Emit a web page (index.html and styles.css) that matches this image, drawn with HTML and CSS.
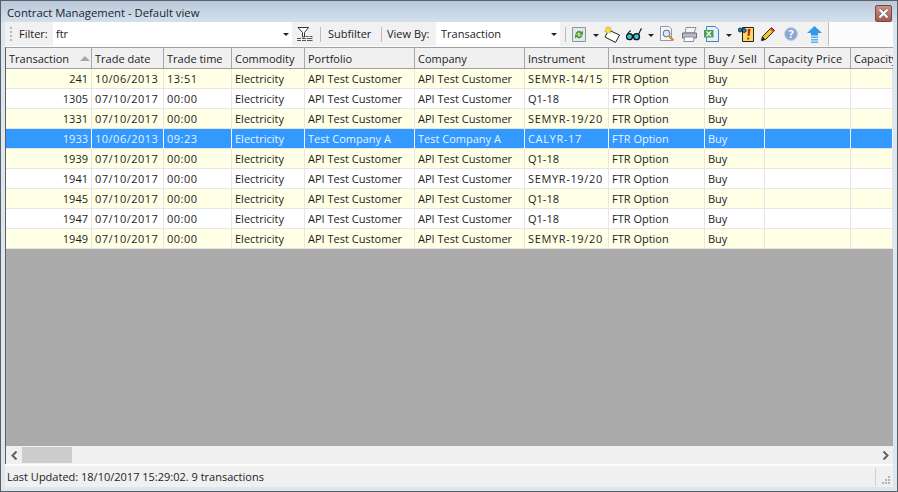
FILE: index.html
```html
<!DOCTYPE html>
<html lang="en">
<head>
  <meta charset="UTF-8" />
  <title>Contract Management</title>
  <link rel="stylesheet" href="styles.css">
</head>
<body>
  <div class="window">
    <div class="titlebar">
      <span class="title">Contract Management - Default view</span>
      <button class="close"><svg width="13" height="11" viewBox="0 0 13 11"><path d="M2.5 1.5 L10.5 9.5 M10.5 1.5 L2.5 9.5" stroke="#6d6d6d" stroke-width="3.6" fill="none"/><path d="M2.5 1.5 L10.5 9.5 M10.5 1.5 L2.5 9.5" stroke="#fff" stroke-width="2.2" fill="none"/></svg></button>
    </div>

    <div class="toolbar">
      <div class="strip">
        <span class="grip"></span>
        <span class="label label-filter">Filter:</span>
        <div class="combo combo-filter"><span>ftr</span><i class="caret"></i></div>
        <svg class="ico-filter" width="16" height="15" viewBox="0 0 16 15"><path d="M1 0.5 H11.5 L7.5 5.5 V10 H5.5 V5.5 Z" fill="#fff" stroke="#333" stroke-width="1"/><path d="M8.5 9.5 H11.5 M12.5 9.5 H15.5 M0 11.5 H4 M5 11.5 H9 M10 11.5 H15.5 M0 13.5 H4 M5 13.5 H9 M10 13.5 H15.5" stroke="#555" stroke-width="1"/></svg>
        <span class="sep sep-a"></span>
        <span class="label label-sub">Subfilter</span>
        <span class="sep sep-b"></span>
        <span class="label label-view">View By:</span>
        <div class="combo combo-view"><span>Transaction</span><i class="caret"></i></div>
        <span class="sep sep-c"></span>
        <svg class="ico-refresh" width="14" height="15" viewBox="0 0 14 15"><path d="M0.5 0.5 H13.5 V14.5 H0.5 Z" fill="#e3e7ef" stroke="#8b93a6"/><path d="M3.5 7 A3.4 3.4 0 0 1 9.5 5 L11 3.5 V7.8 H6.8 L8.2 6.4 A1.6 1.6 0 0 0 5.4 7 Z M10.5 8.2 A3.4 3.4 0 0 1 4.5 10 L3 11.5 V7.4 H7.2 L5.8 8.7 A1.6 1.6 0 0 0 8.6 8.2 Z" fill="#4f9e2c"/></svg>
        <i class="caret drop-a"></i>
        <svg class="ico-new" width="16" height="17" viewBox="0 0 16 17"><path d="M4.5 4 L15.5 9 L11.5 16.5 L1 11 Z" fill="#fff" stroke="#222"/><path d="M4 0 L4.8 2.4 L7 1 L6 3.4 L8.5 4.2 L6 5 L6.5 7.5 L4.5 6 L3 8 L2.8 5.5 L0.2 5.2 L2.4 3.7 L1 1.5 L3.2 2.4 Z" fill="#f5e13c" stroke="#b59b1a" stroke-width=".4"/></svg>
        <svg class="ico-glasses" width="16" height="13" viewBox="0 0 16 13"><circle cx="3.5" cy="8.7" r="3" fill="#35c8dc" stroke="#111" stroke-width="1.3"/><circle cx="10.5" cy="8.7" r="3" fill="#35c8dc" stroke="#111" stroke-width="1.3"/><path d="M6 7.5 Q7 6.5 8 7.5 M1.5 6 L4 3 H5 M12.5 6.5 L15 1 H16" stroke="#111" fill="none" stroke-width="1.1"/></svg>
        <i class="caret drop-b"></i>
        <svg class="ico-preview" width="15" height="16" viewBox="0 0 15 16"><path d="M0.5 0.5 H9 L11.5 3 V14.5 H0.5 Z" fill="#f4f6fb" stroke="#8d97ae"/><circle cx="6.5" cy="7.5" r="3.4" fill="#d6e8f6" stroke="#667"/><path d="M9 10 L13.5 14.5" stroke="#d98b2b" stroke-width="2.4"/></svg>
        <svg class="ico-print" width="15" height="15" viewBox="0 0 15 15"><path d="M4 0.5 H14 L12 6 H3 Z" fill="#f1f2f4" stroke="#8b8f98"/><path d="M0.5 6 H14.5 V11 H0.5 Z" fill="#b6bbc4" stroke="#6e737d"/><path d="M2.5 10 H12 L11.5 14.5 H2 Z" fill="#fff" stroke="#8b8f98"/></svg>
        <svg class="ico-excel" width="15" height="16" viewBox="0 0 15 16"><path d="M2.5 0.5 H11 L14.5 3.5 V15.5 H2.5 Z" fill="#e6f0fb" stroke="#4d7fc0"/><path d="M0 4 H9.5 V11.5 H0 Z" fill="#4b9a55"/><path d="M2.5 5.3 L7 10.2 M7 5.3 L2.5 10.2" stroke="#e8f5e8" stroke-width="1.5"/></svg>
        <i class="caret drop-c"></i>
        <svg class="ico-note" width="16" height="16" viewBox="0 0 16 16"><path d="M4.5 1.5 H15.5 V15.5 H4.5 Z" fill="#f3df5e" stroke="#222"/><path d="M10 3 L9.5 10 H11.5 L12.5 3 Z M9.2 11.5 H11.2 V13.5 H9.2 Z" fill="#d5161c"/><circle cx="2.2" cy="4" r="2" fill="#1d7fb0" stroke="#123" stroke-width=".8"/><circle cx="6.2" cy="4.5" r="2" fill="#1d7fb0" stroke="#123" stroke-width=".8"/></svg>
        <svg class="ico-pencil" width="14" height="14" viewBox="0 0 14 14"><path d="M10.5 0.5 L13.5 3.5 L4.5 12.5 L0.5 13.5 L1.5 9.5 Z" fill="#f2c52c" stroke="#222"/><path d="M10.5 0.5 L13.5 3.5 L12 5 L9 2 Z" fill="#d93a2b"/><path d="M0.5 13.5 L1.5 9.5 L4.5 12.5 Z" fill="#222"/></svg>
        <svg class="ico-help" width="14" height="14" viewBox="0 0 14 14"><circle cx="7" cy="7" r="6.4" fill="#8aa8d2" stroke="#bccde4"/><text x="7" y="11" class="help-mark">?</text></svg>
        <svg class="ico-up" width="15" height="17" viewBox="0 0 15 17"><path d="M7.5 0 L15 7 H11 V9.5 H4 V7 H0 Z" fill="#2f9be8"/><path d="M4 10.5 H11 V12 H4 Z M4 13 H11 V14.5 H4 Z M4 15.5 H11 V17 H4 Z" fill="#55b2ee"/></svg>
        <span class="sep sep-end"></span>
      </div>
    </div>

    <div class="grid">
      <table class="contracts">
        <colgroup>
          <col class="c-id"><col class="c-date"><col class="c-time"><col class="c-comm"><col class="c-port"><col class="c-port"><col class="c-inst"><col class="c-type"><col class="c-side"><col class="c-price"><col class="c-cap">
        </colgroup>
        <thead>
          <tr>
            <th>Transaction<i class="sort"></i></th><th>Trade date</th><th>Trade time</th><th>Commodity</th><th>Portfolio</th><th>Company</th><th>Instrument</th><th class="wide-head">Instrument type</th><th class="wide-head">Buy / Sell</th><th class="wide-head">Capacity Price</th><th>Capacity</th>
          </tr>
        </thead>
        <tbody>
          <tr class="odd"><td class="num">241</td><td class="stamp">10/06/2013</td><td class="stamp">13:51</td><td>Electricity</td><td>API Test Customer</td><td>API Test Customer</td><td class="code">SEMYR-14/15</td><td>FTR Option</td><td>Buy</td><td></td><td></td></tr>
          <tr><td class="num">1305</td><td class="stamp">07/10/2017</td><td class="stamp">00:00</td><td>Electricity</td><td>API Test Customer</td><td>API Test Customer</td><td>Q1-18</td><td>FTR Option</td><td>Buy</td><td></td><td></td></tr>
          <tr class="odd"><td class="num">1331</td><td class="stamp">07/10/2017</td><td class="stamp">00:00</td><td>Electricity</td><td>API Test Customer</td><td>API Test Customer</td><td class="code">SEMYR-19/20</td><td>FTR Option</td><td>Buy</td><td></td><td></td></tr>
          <tr class="selected"><td class="num">1933</td><td class="stamp">10/06/2013</td><td class="stamp">09:23</td><td>Electricity</td><td>Test Company A</td><td>Test Company A</td><td class="code">CALYR-17</td><td>FTR Option</td><td>Buy</td><td></td><td></td></tr>
          <tr class="odd"><td class="num">1939</td><td class="stamp">07/10/2017</td><td class="stamp">00:00</td><td>Electricity</td><td>API Test Customer</td><td>API Test Customer</td><td>Q1-18</td><td>FTR Option</td><td>Buy</td><td></td><td></td></tr>
          <tr><td class="num">1941</td><td class="stamp">07/10/2017</td><td class="stamp">00:00</td><td>Electricity</td><td>API Test Customer</td><td>API Test Customer</td><td class="code">SEMYR-19/20</td><td>FTR Option</td><td>Buy</td><td></td><td></td></tr>
          <tr class="odd"><td class="num">1945</td><td class="stamp">07/10/2017</td><td class="stamp">00:00</td><td>Electricity</td><td>API Test Customer</td><td>API Test Customer</td><td>Q1-18</td><td>FTR Option</td><td>Buy</td><td></td><td></td></tr>
          <tr><td class="num">1947</td><td class="stamp">07/10/2017</td><td class="stamp">00:00</td><td>Electricity</td><td>API Test Customer</td><td>API Test Customer</td><td>Q1-18</td><td>FTR Option</td><td>Buy</td><td></td><td></td></tr>
          <tr class="odd"><td class="num">1949</td><td class="stamp">07/10/2017</td><td class="stamp">00:00</td><td>Electricity</td><td>API Test Customer</td><td>API Test Customer</td><td class="code">SEMYR-19/20</td><td>FTR Option</td><td>Buy</td><td></td><td></td></tr>
        </tbody>
      </table>
      <div class="scrollbar">
        <svg class="arrow" width="7" height="9" viewBox="0 0 7 9"><path d="M5.5 0.5 L1.5 4.5 L5.5 8.5" fill="none" stroke="#606060" stroke-width="2"/></svg>
        <span class="thumb"></span>
        <svg class="arrow right" width="7" height="9" viewBox="0 0 7 9"><path d="M1.5 0.5 L5.5 4.5 L1.5 8.5" fill="none" stroke="#606060" stroke-width="2"/></svg>
      </div>
    </div>

    <div class="statusbar">
      <span class="status-text">Last Updated: 18/10/2017 15:29:02. 9 transactions</span>
      <span class="status-grip"><svg width="9" height="9" viewBox="0 0 9 9"><path d="M6 0h2v2H6zM3 3h2v2H3zM6 3h2v2H6zM0 6h2v2H0zM3 6h2v2H3zM6 6h2v2H6z" fill="#b4b4b4"/></svg></span>
    </div>
  </div>
</body>
</html>
```

FILE: styles.css
```css
* {
  box-sizing: border-box;
}

html, body {
  height: 100%;
}

body {
  margin: 0;
  font-family: "Open Sans", "Noto Sans", sans-serif;
  font-size: 11px;
  color: #1c1c1c;
  overflow: hidden;
}

.window {
  height: 492px;
  display: flex;
  flex-direction: column;
  background: #dce7f2;
  border: 1px solid #5a5f66;
  padding: 0 4px 4px;
}

.titlebar {
  height: 21px;
  flex: none;
  display: flex;
  align-items: center;
  justify-content: space-between;
  background: linear-gradient(#b9c8da, #d4e0ec);
  margin: 0 -4px;
  padding: 2px 5px 0 6px;
}

.title {
  font-size: 11.3px;
  color: #20262c;
}

.close {
  width: 17px;
  height: 17px;
  padding: 0;
  align-self: flex-end;
  display: flex;
  align-items: center;
  justify-content: center;
  background: linear-gradient(#cf8f86, #a9584e);
  border: 1px solid #6e4a46;
  border-radius: 2px;
}

/* toolbar */
.toolbar {
  height: 25px;
  flex: none;
  background: #fcfcfc;
  padding-right: 64px;
}

.strip {
  height: 24px;
  display: flex;
  align-items: center;
  background: #f1f1f1;
  border-radius: 0 0 3px 0;
  padding-left: 5px;
}

.strip svg {
  flex: none;
}

.grip {
  width: 2px;
  height: 15px;
  flex: none;
  margin-right: 7px;
  background: repeating-linear-gradient(#b8b8b8 0 2px, transparent 2px 4px);
}

.label {
  flex: none;
  white-space: nowrap;
  padding-bottom: 2px;
}

.label-filter { width: 34px; }
.label-sub { width: 53px; }
.label-view { width: 49px; }

.combo {
  height: 24px;
  flex: none;
  display: flex;
  align-items: center;
  justify-content: space-between;
  background: #fff;
  padding: 0 3px 2px;
}

.combo-filter { width: 239px; }

.combo-view {
  width: 124px;
  padding-left: 5px;
}

.caret {
  width: 0;
  height: 0;
  flex: none;
  border: 3px solid transparent;
  border-top: 3px solid #222;
  border-bottom: 0;
  margin-top: 2px;
}

.sep {
  width: 1px;
  height: 15px;
  flex: none;
  background: #bdbdbd;
}

.sep-a { margin: 0 7px; }
.sep-b { margin-right: 5px; }
.sep-c { margin-left: 5px; }

.sep-end {
  height: 24px;
  margin-left: 6px;
}

.ico-filter { margin-left: 5px; }
.ico-refresh { margin-left: 6px; }
.drop-a { margin-left: 7px; }
.ico-new { margin-left: 5px; }
.ico-glasses { margin-left: 6px; }
.drop-b { margin-left: 6px; }
.ico-preview { margin-left: 6px; }
.ico-print { margin-left: 7px; }
.ico-excel { margin-left: 7px; }
.drop-c { margin-left: 7px; }
.ico-note { margin-left: 6px; }
.ico-pencil { margin-left: 7px; }
.ico-help { margin-left: 9px; }
.ico-up { margin-left: 9px; }

.help-mark {
  font-size: 11px;
  font-weight: 700;
  fill: #fff;
  text-anchor: middle;
}

/* grid */
.grid {
  flex: 1;
  display: flex;
  flex-direction: column;
  min-height: 0;
  background: #ababab;
  border-left: 1px solid #5f5f5f;
  border-top: 1px solid #a0a0a0;
  overflow: hidden;
}

.contracts {
  width: 887px;
  table-layout: fixed;
  border-collapse: separate;
  border-spacing: 0;
  flex: none;
}

.c-id { width: 86px; }
.c-date { width: 72px; }
.c-time { width: 68px; }
.c-comm { width: 73px; }
.c-port { width: 110px; }
.c-inst { width: 84px; }
.c-type { width: 96px; }
.c-side { width: 60px; }
.c-price { width: 86px; }

th {
  height: 21px;
  padding: 0 3px;
  position: relative;
  font-weight: 400;
  text-align: left;
  white-space: nowrap;
  overflow: hidden;
  background: #f0f0f0;
  border-right: 1px solid #a8a8a8;
  border-bottom: 1px solid #a0a0a0;
}

th:last-child {
  border-right: 0;
}

.wide-head {
  letter-spacing: .2px;
}

.sort {
  position: absolute;
  right: 1px;
  top: 8px;
  width: 0;
  height: 0;
  border: 5px solid transparent;
  border-top: 0;
  border-bottom: 5px solid #a6a6a6;
}

td {
  height: 20px;
  padding: 0 3px;
  white-space: nowrap;
  overflow: hidden;
  background: #fff;
  color: #1c1c1c;
  border-right: 1px solid #e6e6e6;
  border-bottom: 1px solid #e6e6e6;
}

tr.odd td {
  background: #ffffe6;
}

tr.selected td {
  background: #3399ff;
  color: #e6f2ff;
  border-right-color: #f4f9ff;
}

.num {
  text-align: right;
}

.stamp {
  letter-spacing: .5px;
}

.code {
  letter-spacing: .65px;
}

.scrollbar {
  height: 18px;
  margin-top: auto;
  flex: none;
  display: flex;
  align-items: center;
  background: #f0f0f0;
  padding: 0 4px 0 5px;
}

.thumb {
  width: 50px;
  height: 16px;
  margin-left: 4px;
  background: #cdcdcd;
}

.arrow.right {
  margin-left: auto;
}

/* status bar */
.statusbar {
  height: 23px;
  flex: none;
  display: flex;
  align-items: center;
  justify-content: space-between;
  background: #f0f0f0;
  border-top: 2px solid #fcfcfc;
}

.status-text {
  padding-left: 2px;
}

.status-grip {
  width: 18px;
  height: 18px;
  display: flex;
  align-items: flex-end;
  justify-content: flex-end;
  padding: 0 2px 1px 0;
  border-left: 1px solid #d0d0d0;
}
```
